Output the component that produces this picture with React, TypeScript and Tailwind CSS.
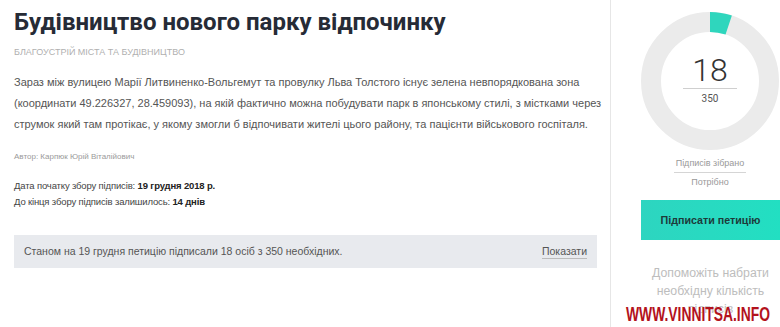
import React from "react";

const body = { fontFamily: "'Liberation Sans', Arial, sans-serif" };
const roboto = { fontFamily: "Roboto, 'Liberation Sans', sans-serif" };

function Donut() {
  const r = 59;
  const c = 2 * Math.PI * r;
  const frac = 18 / 350;
  return (
    <div className="relative w-[138px] h-[138px]">
      <svg width="138" height="138" viewBox="0 0 138 138">
        <circle cx="69" cy="69" r={r} fill="none" stroke="#ebebeb" strokeWidth="20" />
        <circle
          cx="69"
          cy="69"
          r={r}
          fill="none"
          stroke="#2fd6bd"
          strokeWidth="20"
          strokeDasharray={`${c * frac} ${c}`}
          transform="rotate(-90 69 69)"
        />
      </svg>
      <div className="absolute inset-0 flex flex-col items-center">
        <div className="mt-[38px] text-[32px] leading-[40px] font-light text-[#333]" style={roboto}>18</div>
        <div className="w-[54px] h-px bg-[#cfcfcf] mt-[-2px]" />
        <div className="mt-[4px] text-[10px] leading-[12px] text-[#555]" style={roboto}>350</div>
      </div>
    </div>
  );
}

export default function App() {
  return (
    <div className="w-[780px] h-[327px] bg-white overflow-hidden flex" style={body}>
      <div className="w-[611px] shrink-0 border-r border-[#e6e6e6] pl-[14px] pr-[14px] flex flex-col">
        <h1 className="mt-[6px] text-[24px] leading-[32px] font-bold text-[#262b36] whitespace-nowrap" style={roboto}>
          Будівництво нового парку відпочинку
        </h1>
        <div className="mt-[7px] text-[9px] leading-[14px] uppercase text-[#b0b0b0] whitespace-nowrap">
          Благоустрій міста та будівництво
        </div>
        <div className="mt-[13px] text-[11px] leading-[21px] text-[#555] whitespace-nowrap">
          <div className="w-[548px] text-justify [text-align-last:justify]">Зараз між вулицею Марії Литвиненко-Вольгемут та провулку Льва Толстого існує зелена невпорядкована зона</div>
          <div className="w-[559px] text-justify [text-align-last:justify]">(координати 49.226327, 28.459093), на якій фактично можна побудувати парк в японському стилі, з містками через</div>
          <div className="w-[564px] text-justify [text-align-last:justify]">струмок який там протікає, у якому змогли б відпочивати жителі цього району, та пацієнти військового госпіталя.</div>
        </div>
        <div className="mt-[16px] text-[8px] leading-[12px] text-[#9a9a9a] whitespace-nowrap">
          Автор: Карпюк Юрій Віталійович
        </div>
        <div className="mt-[15px] text-[9.5px] leading-[16px] tracking-[-0.15px] text-[#444] whitespace-nowrap">
          <div>Дата початку збору підписів: <b className="font-bold text-[#222]">19 грудня 2018 р.</b></div>
          <div>До кінця збору підписів залишилось: <b className="font-bold text-[#222]">14 днів</b></div>
        </div>
        <div className="mt-[25px] w-[583px] h-[33px] bg-[#e8eaee] flex items-center justify-between pl-[10px] pr-[10px]">
          <span className="text-[10.5px] text-[#555] whitespace-nowrap">
            Станом на 19 грудня петицію підписали 18 осіб з 350 необхідних.
          </span>
          <span className="text-[10.5px] text-[#555] leading-[14px] border-b border-[#bbb] whitespace-nowrap">Показати</span>
        </div>
      </div>
      <div className="flex-1 pl-[30px] flex flex-col">
        <div className="mt-[12px]">
          <Donut />
        </div>
        <div className="w-[138px] flex flex-col items-center mt-[6px]">
          <div className="text-[9px] leading-[14px] text-[#999] whitespace-nowrap">Підписів зібрано</div>
          <div className="w-[72px] h-px bg-[#d5d5d5] mt-[2px]" />
          <div className="mt-[2px] text-[9px] leading-[14px] text-[#999] whitespace-nowrap">Потрібно</div>
        </div>
        <div className="mt-[11px] w-[139px] h-[40px] bg-gradient-to-r from-[#2dd5c0] to-[#22dfc2] flex items-center justify-center">
          <span className="text-[10.7px] font-bold text-[#1d3a3a] whitespace-nowrap">Підписати петицію</span>
        </div>
        <div className="relative w-[139px] mt-[24px] text-center text-[12.3px] leading-[18px] text-[#bdbdbd]">
          <div>Допоможіть набрати</div>
          <div>необхідну кількість</div>
          <div>підписів</div>
          <div
            className="absolute left-[-63px] top-[40px] w-[240px] text-center text-[21px] leading-[20px] font-bold text-[#b3121c] scale-x-[0.66]"
            style={{ textShadow: "0 0 2px #fff" }}
          >
            WWW.VINNITSA.INFO
          </div>
        </div>
      </div>
    </div>
  );
}
